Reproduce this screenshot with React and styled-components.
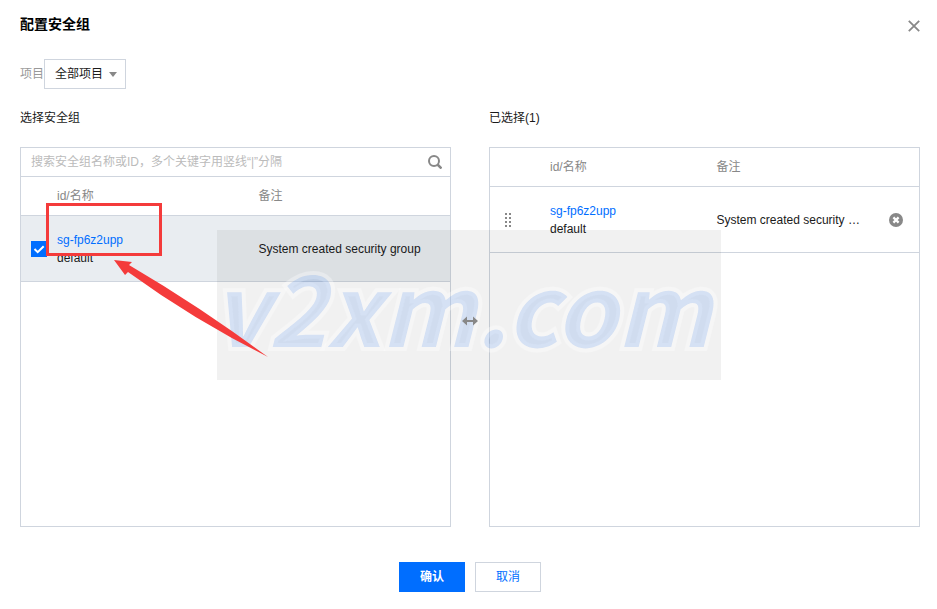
import React, { useState } from "react";
import styled, { ThemeProvider, createGlobalStyle } from "styled-components";

const theme = {
  colors: {
    primary: "#006eff",
    text: "#1a1a1a",
    textMuted: "#888",
    placeholder: "#bbb",
    border: "#cfd5de",
    rowSelected: "#e9edf1",
    mark: "#f43b3b",
  },
  font: '"Liberation Sans", "Noto Sans CJK SC", sans-serif',
};

const GlobalStyle = createGlobalStyle`
  *, *::before, *::after {
    box-sizing: border-box;
  }

  body {
    margin: 0;
    background-color: #fff;
  }

  body, button, input, select {
    font-family: ${theme.font};
    font-size: 12px;
    line-height: 18px;
    color: ${theme.colors.text};
  }
`;

const Dialog = styled.main`
  padding: 14px 17px 17px 20px;
`;

const Header = styled.header`
  display: flex;
  align-items: flex-end;
  justify-content: space-between;
  height: 22px;
`;

const Title = styled.h1`
  margin: 0;
  align-self: flex-start;
  font-size: 14px;
  font-weight: 700;
  line-height: 20px;
  color: #000;
`;

const IconButton = styled.button`
  display: flex;
  align-items: center;
  justify-content: center;
  padding: 0;
  border: none;
  background: none;
  color: ${({ theme }) => theme.colors.textMuted};
  cursor: pointer;
`;

const CloseButton = styled(IconButton)`
  height: 20px;
`;

const Filter = styled.div`
  display: flex;
  align-items: center;
  margin-top: 23px;
`;

const FilterLabel = styled.label`
  color: #999;
`;

const SelectBox = styled.div`
  position: relative;

  &::after {
    content: "";
    position: absolute;
    top: 13px;
    right: 9px;
    border: 4px solid transparent;
    border-top: 5px solid ${({ theme }) => theme.colors.textMuted};
    border-bottom: none;
    pointer-events: none;
  }
`;

const Select = styled.select`
  display: block;
  width: 82px;
  height: 30px;
  padding: 0 20px 0 10px;
  border: 1px solid ${({ theme }) => theme.colors.border};
  border-radius: 0;
  background-color: #fff;
  appearance: none;
`;

const Transfer = styled.div`
  display: grid;
  grid-template-columns: minmax(0, 1fr) 38px minmax(0, 1fr);
  margin-top: 20px;
`;

const Column = styled.section`
  display: flex;
  flex-direction: column;
  gap: 20px;
`;

const ColumnTitle = styled.h2`
  margin: 0;
  font-size: 12px;
  font-weight: 400;
  line-height: 18px;
`;

const Panel = styled.div`
  position: relative;
  min-height: 380px;
  border: 1px solid ${({ theme }) => theme.colors.border};
`;

const Middle = styled.div`
  position: relative;
  z-index: 2;
  display: flex;
  align-items: center;
  justify-content: center;
  padding-top: 6px;
  color: ${({ theme }) => theme.colors.textMuted};
`;

const SearchBar = styled.div`
  display: flex;
  align-items: center;
  height: 29px;
  padding: 0 8px 0 10px;
  border-bottom: 1px solid ${({ theme }) => theme.colors.border};
`;

const SearchInput = styled.input`
  flex: 1;
  min-width: 0;
  padding: 0;
  border: none;
  outline: none;
  background: none;

  &::placeholder {
    color: ${({ theme }) => theme.colors.placeholder};
  }
`;

const Table = styled.table`
  width: 100%;
  table-layout: fixed;
  border-collapse: separate;
  border-spacing: 0;
`;

const Col = styled.col`
  width: ${({ $width }) => ($width ? `${$width}px` : "auto")};
`;

const HeadCell = styled.th`
  height: 39px;
  padding: 0 10px;
  border-bottom: 1px solid ${({ theme }) => theme.colors.border};
  font-weight: 400;
  text-align: left;
  color: ${({ theme }) => theme.colors.textMuted};
`;

const Row = styled.tr`
  background-color: ${({ $selected, theme }) => ($selected ? theme.colors.rowSelected : "#fff")};
`;

const Cell = styled.td`
  height: 66px;
  padding: ${({ $pad }) => $pad || "0 10px"};
  border-bottom: 1px solid ${({ theme }) => theme.colors.border};
  overflow: hidden;
  text-overflow: ellipsis;
  white-space: nowrap;
`;

const GroupLink = styled.a`
  display: block;
  color: ${({ theme }) => theme.colors.primary};
  text-decoration: none;
`;

const Checkbox = styled.input`
  display: block;
  width: 16px;
  height: 16px;
  margin: 0;
  appearance: none;
  border: 1px solid ${({ theme }) => theme.colors.border};
  background-color: #fff;

  &:checked {
    border-color: ${({ theme }) => theme.colors.primary};
    background: ${({ theme }) => theme.colors.primary}
      url("data:image/svg+xml,%3Csvg xmlns='http://www.w3.org/2000/svg' viewBox='0 0 14 14'%3E%3Cpath d='M2.5 7l3.2 3.2 6-6' fill='none' stroke='white' stroke-width='2'/%3E%3C/svg%3E");
  }
`;

const Footer = styled.footer`
  display: flex;
  justify-content: center;
  gap: 10px;
  margin-top: 35px;
`;

const Button = styled.button`
  width: 66px;
  height: 30px;
  padding: 0;
  border: 1px solid ${({ $primary, theme }) => ($primary ? theme.colors.primary : theme.colors.border)};
  background-color: ${({ $primary, theme }) => ($primary ? theme.colors.primary : "#fff")};
  color: ${({ $primary, theme }) => ($primary ? "#fff" : theme.colors.primary)};
  font-weight: ${({ $primary }) => ($primary ? 700 : 400)};
  cursor: pointer;
`;

const MarkFrame = styled.div`
  position: absolute;
  top: 55px;
  left: 25px;
  width: 116px;
  height: 53px;
  border: 3px solid ${({ theme }) => theme.colors.mark};
  pointer-events: none;
`;

const MarkArrow = styled.svg`
  position: absolute;
  z-index: 2;
  top: 112px;
  left: 93px;
  pointer-events: none;
`;

const WatermarkLayer = styled.div`
  position: fixed;
  inset: 0;
  display: grid;
  place-items: center;
  pointer-events: none;
`;

const Watermark = styled.div`
  display: flex;
  align-items: center;
  justify-content: center;
  width: 504px;
  height: 150px;
  padding: 0 14px 2px 0;
  background-color: rgba(0, 0, 0, 0.055);
  font-family: "Noto Sans CJK SC", sans-serif;
  font-size: 98px;
  font-style: italic;
  font-weight: 700;
  line-height: 100px;
  color: rgba(10, 89, 224, 0.14);
  -webkit-text-stroke: 8px rgba(255, 255, 255, 0.3);
  paint-order: stroke fill;
`;

const CloseIcon = () => (
  <svg width="12" height="12" viewBox="0 0 12 12" fill="none" stroke="currentColor" strokeWidth="1.8">
    <path d="M.8.8l10.4 10.4M11.2.8L.8 11.2" />
  </svg>
);

const SearchIcon = () => (
  <svg width="14" height="14" viewBox="0 0 14 14" fill="none" stroke="currentColor" strokeWidth="2">
    <circle cx="6" cy="6" r="5" />
    <path d="M9.5 9.5l4 4" strokeWidth="2.5" />
  </svg>
);

const SwapIcon = () => (
  <svg width="16" height="10" viewBox="0 0 16 10" fill="currentColor">
    <path d="M0 5l5-4.5V4h6V.5L16 5l-5 4.5V6H5v3.5z" />
  </svg>
);

const DragIcon = () => (
  <svg width="6" height="14" viewBox="0 0 6 14" fill="currentColor">
    {[0, 4, 8, 12].map((y) => (
      <path key={y} d={`M0 ${y}h2v2H0zM4 ${y}h2v2H4z`} />
    ))}
  </svg>
);

const RemoveIcon = () => (
  <svg width="14" height="14" viewBox="0 0 14 14">
    <circle cx="7" cy="7" r="7" fill="currentColor" />
    <path d="M4.4 4.4l5.2 5.2M9.6 4.4L4.4 9.6" stroke="#fff" strokeWidth="2.2" />
  </svg>
);

const groups = [{ id: "sg-fp6z2upp", name: "default", remark: "System created security group" }];

const App = () => {
  const [selected, setSelected] = useState(["sg-fp6z2upp"]);
  const [keyword, setKeyword] = useState("");

  const toggle = (id) => {
    setSelected((prev) => (prev.includes(id) ? prev.filter((item) => item !== id) : [...prev, id]));
  };

  const visible = groups.filter((g) => keyword.split("|").some((k) => g.id.includes(k) || g.name.includes(k)));
  const chosen = groups.filter((g) => selected.includes(g.id));

  return (
    <ThemeProvider theme={theme}>
      <GlobalStyle />
      <Dialog>
        <Header>
          <Title>配置安全组</Title>
          <CloseButton aria-label="关闭">
            <CloseIcon />
          </CloseButton>
        </Header>

        <Filter>
          <FilterLabel htmlFor="project">项目</FilterLabel>
          <SelectBox>
            <Select id="project">
              <option>全部项目</option>
            </Select>
          </SelectBox>
        </Filter>

        <Transfer>
          <Column>
            <ColumnTitle>选择安全组</ColumnTitle>
            <Panel>
              <SearchBar>
                <SearchInput
                  aria-label="搜索安全组"
                  placeholder="搜索安全组名称或ID，多个关键字用竖线“|”分隔"
                  value={keyword}
                  onChange={(e) => setKeyword(e.target.value)}
                />
                <IconButton aria-label="搜索">
                  <SearchIcon />
                </IconButton>
              </SearchBar>
              <Table>
                <colgroup>
                  <Col $width={26} />
                  <Col />
                  <Col />
                </colgroup>
                <thead>
                  <tr>
                    <HeadCell />
                    <HeadCell>id/名称</HeadCell>
                    <HeadCell>备注</HeadCell>
                  </tr>
                </thead>
                <tbody>
                  {visible.map((group) => (
                    <Row key={group.id} $selected={selected.includes(group.id)}>
                      <Cell $pad="0 0 0 10px">
                        <Checkbox
                          type="checkbox"
                          aria-label={group.id}
                          checked={selected.includes(group.id)}
                          onChange={() => toggle(group.id)}
                        />
                      </Cell>
                      <Cell>
                        <GroupLink href="#">{group.id}</GroupLink>
                        {group.name}
                      </Cell>
                      <Cell>{group.remark}</Cell>
                    </Row>
                  ))}
                </tbody>
              </Table>
              <MarkFrame />
              <MarkArrow width="156" height="98" viewBox="0 0 156 98" fill={theme.colors.mark}>
                <path d="M0 0L18 2L15 5Q85 46 154 97Q80 60 14 12L11 15Z" />
              </MarkArrow>
            </Panel>
          </Column>

          <Middle>
            <SwapIcon />
          </Middle>

          <Column>
            <ColumnTitle>已选择({chosen.length})</ColumnTitle>
            <Panel>
              <Table>
                <colgroup>
                  <Col $width={50} />
                  <Col />
                  <Col />
                  <Col $width={46} />
                </colgroup>
                <thead>
                  <tr>
                    <HeadCell />
                    <HeadCell>id/名称</HeadCell>
                    <HeadCell>备注</HeadCell>
                    <HeadCell />
                  </tr>
                </thead>
                <tbody>
                  {chosen.map((group) => (
                    <Row key={group.id}>
                      <Cell $pad="0 0 0 15px">
                        <IconButton aria-label="拖动排序">
                          <DragIcon />
                        </IconButton>
                      </Cell>
                      <Cell>
                        <GroupLink href="#">{group.id}</GroupLink>
                        {group.name}
                      </Cell>
                      <Cell>{group.remark}</Cell>
                      <Cell $pad="0 16px">
                        <IconButton aria-label="移除" onClick={() => toggle(group.id)}>
                          <RemoveIcon />
                        </IconButton>
                      </Cell>
                    </Row>
                  ))}
                </tbody>
              </Table>
            </Panel>
          </Column>
        </Transfer>

        <Footer>
          <Button $primary>确认</Button>
          <Button>取消</Button>
        </Footer>
      </Dialog>
      <WatermarkLayer aria-hidden="true">
        <Watermark>v2xm.com</Watermark>
      </WatermarkLayer>
    </ThemeProvider>
  );
};

export default App;
